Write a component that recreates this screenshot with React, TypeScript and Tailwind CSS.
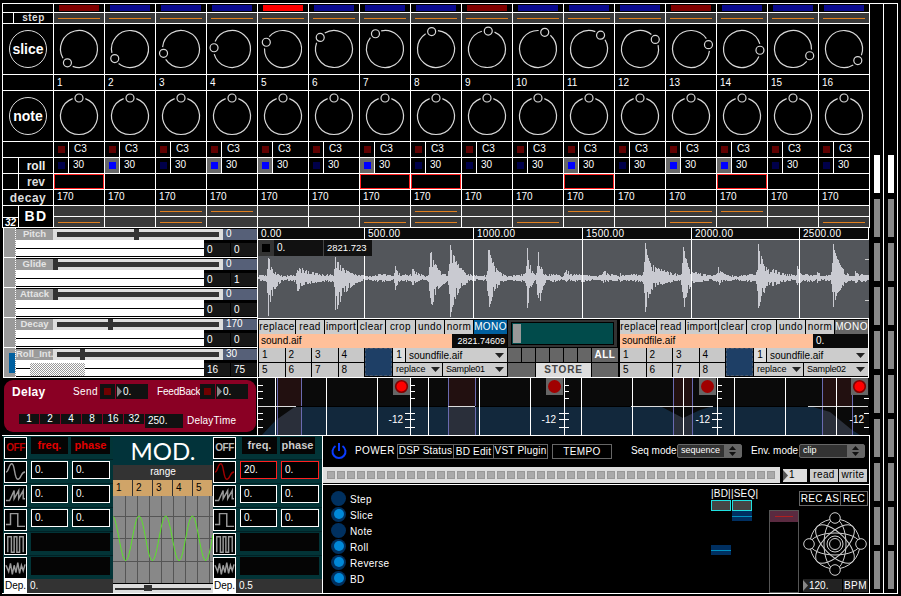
import React from 'react';

const steps = Array.from({ length: 16 }, (_, i) => i);

const stepColors: Record<number, string> = { 0: 'bg-[#800000]', 4: 'bg-[#ff0000]', 8: 'bg-[#800000]', 12: 'bg-[#800000]' };
const rollOn = [1, 3, 4, 6, 10, 12, 13];
const revOn = [0, 6, 7, 10, 13];
const bdTop = [2, 3, 7, 10, 12, 13];
const bdBottom = [0, 2, 6, 7, 9, 12, 15];

function Knob({ angle }: { angle: number }) {
  const r = 18.5;
  const pt = (a: number, rad: number) => {
    const t = (a * Math.PI) / 180;
    return [25 - rad * Math.sin(t), 25 + rad * Math.cos(t)];
  };
  const [x1, y1] = pt(angle + 20, r);
  const [x2, y2] = pt(angle - 20, r);
  const [cx, cy] = pt(angle, 18);
  return (
    <svg width="50" height="50" className="block">
      <path d={`M${x1} ${y1} A${r} ${r} 0 1 1 ${x2} ${y2}`} fill="none" stroke="#d8d8d8" strokeWidth="1.2" />
      <circle cx={cx} cy={cy} r="4" fill="none" stroke="#d8d8d8" strokeWidth="1.2" />
    </svg>
  );
}

function Cell({ children, className = '' }: { children?: React.ReactNode; className?: string }) {
  return <div className={`w-[51px] shrink-0 border-r border-white ${className}`}>{children}</div>;
}

function Sequencer() {
  return (
    <div className="flex flex-col border-t border-l border-white w-[868px] text-white">
      <div className="flex h-[9px] border-b border-white">
        <Cell />
        {steps.map((i) => (
          <Cell key={i} className="flex items-center justify-center">
            <div className={`w-[40px] h-[6px] ${stepColors[i] ?? 'bg-[#0a0a90]'}`} />
          </Cell>
        ))}
      </div>
      <div className="flex h-[11px] border-b border-white">
        <div className="w-[11px] border-r border-white" />
        <div className="w-[40px] border-r border-white flex items-center justify-center text-[10px] font-bold leading-none tracking-[0.5px] text-[#ddd]">
          step
        </div>
        {steps.map((i) => (
          <Cell key={i} className="bg-[#3a3a3a] flex items-center justify-center">
            <div className="w-[42px] h-px bg-[#e08020]" />
          </Cell>
        ))}
      </div>
      <div className="flex h-[51px] border-b border-white">
        <Cell className="flex items-center justify-center">
          <div className="w-[38px] h-[38px] rounded-full border border-[#ddd] flex items-center justify-center text-[14px] font-bold">slice</div>
        </Cell>
        {steps.map((i) => (
          <Cell key={i}>
            <Knob angle={40 + i * 18} />
          </Cell>
        ))}
      </div>
      <div className="flex h-[16px] border-b border-white">
        <Cell />
        {steps.map((i) => (
          <Cell key={i} className="pl-[3px] text-[10px] leading-[15px]">
            {i + 1}
          </Cell>
        ))}
      </div>
      <div className="flex h-[51px] border-b border-white">
        <Cell className="flex items-center justify-center">
          <div className="w-[38px] h-[38px] rounded-full border border-[#ddd] flex items-center justify-center text-[14px] font-bold">note</div>
        </Cell>
        {steps.map((i) => (
          <Cell key={i}>
            <Knob angle={180} />
          </Cell>
        ))}
      </div>
      <div className="flex h-[16px] border-b border-white">
        <Cell />
        {steps.map((i) => (
          <Cell key={i} className="flex">
            <div className="w-[15px] border-r border-white flex items-center justify-center">
              <div className="w-[7px] h-[7px] bg-[#600000]" />
            </div>
            <div className="pl-[5px] text-[10px] leading-[14px]">C3</div>
          </Cell>
        ))}
      </div>
      <div className="flex h-[16px] border-b border-white">
        <div className="w-[16px] border-r border-white" />
        <div className="w-[35px] border-r border-white flex items-center justify-center text-[12px] font-bold leading-none text-[#eee]">roll</div>
        {steps.map((i) => {
          const on = rollOn.includes(i);
          return (
            <Cell key={i} className="flex">
              <div className={`w-[15px] border-r border-white flex items-center justify-center ${on ? 'bg-[#666]' : ''}`}>
                <div className={`w-[7px] h-[7px] ${on ? 'bg-[#0000ff]' : 'bg-[#00004a]'}`} />
              </div>
              <div className="pl-[4px] text-[10px] leading-[14px]">30</div>
            </Cell>
          );
        })}
      </div>
      <div className="flex h-[16px] border-b border-white">
        <div className="w-[16px] border-r border-white" />
        <div className="w-[35px] border-r border-white flex items-center justify-center text-[12px] font-bold leading-none text-[#ddd]">rev</div>
        {steps.map((i) => (
          <Cell key={i}>{revOn.includes(i) && <div className="h-full border border-[#ff2020]" />}</Cell>
        ))}
      </div>
      <div className="flex h-[16px] border-b border-white">
        <Cell className="flex items-center justify-center text-[12px] font-bold leading-none text-[#ddd] tracking-[0.5px]">decay</Cell>
        {steps.map((i) => (
          <Cell key={i} className="pl-[3px] text-[10px] leading-[14px]">
            170
          </Cell>
        ))}
      </div>
      <div className="flex">
        <div className="w-[51px] shrink-0 flex border-r border-b border-white">
          <div className="w-[16px] border-r border-white flex flex-col justify-end">
            <div className="h-[10px] border-t border-white text-[10px] leading-[10px] font-bold italic text-center">32</div>
          </div>
          <div className="flex-1 flex items-center justify-center text-[14px] font-bold tracking-[1.5px]">BD</div>
        </div>
        <div className="flex flex-col">
          {[bdTop, bdBottom].map((list, r) => (
            <div key={r} className="flex h-[11px] border-b border-white">
              {steps.map((i) => (
                <Cell key={i} className="bg-[#3a3a3a] flex items-center justify-center">
                  {list.includes(i) && <div className="w-[42px] h-px bg-[#e08020]" />}
                </Cell>
              ))}
            </div>
          ))}
        </div>
      </div>
    </div>
  );
}

function ParamRow({ label, value, thumb, a, b, roll }: { label: string; value: string; thumb: number; a: string; b: string; roll?: boolean }) {
  return (
    <div className="flex h-[30px] border-l border-b border-white">
      <div className="w-[12px] bg-[#9a9a9a] border-r border-dotted border-white flex items-end justify-start">
        {roll && <div className="ml-[5px] mb-[4px] w-[6px] h-[20px] bg-[#0060a0]" />}
      </div>
      <div className="w-[241px] flex flex-col">
        <div className="flex h-[11px] mt-px">
          <div className="w-[37px] bg-[#9a9a9a] text-[#e4e4e4] text-[9.5px] font-bold leading-[10px] text-center whitespace-nowrap overflow-hidden">{label}</div>
          <div className="w-[170px] bg-[#ddd] relative flex items-center px-[4px]">
            <div className="w-full h-[5px] bg-[#333]" />
            <div className="absolute top-0 w-[5px] h-[11px] bg-[#333]" style={{ left: thumb }} />
          </div>
          <div className="flex-1 bg-[#566078] text-white text-[10px] leading-[10px] pl-[3px]">{value}</div>
        </div>
        <div className="flex flex-1">
          <div className="w-[188px] h-[16px] bg-white flex flex-col justify-center relative">
            {roll && <div className="absolute left-[14px] top-[3px] w-[55px] h-[13px] bg-[repeating-conic-gradient(#999_0%_25%,#fff_0%_50%)] bg-[length:2px_2px]" />}
            <div className="h-px bg-black" />
          </div>
          <div className="flex-1 flex pt-[3px] gap-px">
            <div className="w-[26px] h-[13px] bg-[#161616] text-white text-[10px] leading-[13px] pl-[3px]">{a}</div>
            <div className="flex-1 h-[13px] bg-[#161616] text-white text-[10px] leading-[13px] pl-[3px]">{b}</div>
          </div>
        </div>
      </div>
    </div>
  );
}

function NumBox({ w }: { w: string }) {
  return (
    <div className={`${w} h-[15px] bg-[#111] flex items-center pl-[1px] text-white text-[10px]`}>
      <Tri />
      <span className="ml-[1px]">0.</span>
    </div>
  );
}

function Tri({ color = '#888' }: { color?: string }) {
  return (
    <svg width="5" height="11" className="block shrink-0">
      <path d="M0 0 L5 5.5 L0 11 Z" fill={color} />
    </svg>
  );
}

function Delay() {
  return (
    <div className="ml-px mt-[2px] w-[252px] h-[52px] rounded-[9px] bg-[#8a0024] text-white flex flex-col">
      <div className="flex items-center mt-[4px] h-[15px]">
        <span className="ml-[8px] w-[61px] text-[12px] font-bold leading-none tracking-[0.3px]">Delay</span>
        <span className="w-[27px] text-[10px] tracking-[0.4px]">Send</span>
        <div className="w-[15px] h-[15px] bg-[#111] flex items-center justify-center">
          <div className="w-[7px] h-[7px] bg-[#700000]" />
        </div>
        <div className="ml-px">
          <NumBox w="w-[32px]" />
        </div>
        <span className="ml-[9px] w-[43px] text-[10px] tracking-[-0.2px] whitespace-nowrap">FeedBack</span>
        <div className="w-[15px] h-[15px] bg-[#111] flex items-center justify-center">
          <div className="w-[7px] h-[7px] bg-[#700000]" />
        </div>
        <div className="ml-px">
          <NumBox w="w-[32px]" />
        </div>
      </div>
      <div className="flex items-start mt-[15px] ml-[15px]">
        <div className="flex gap-px">
          {['1', '2', '4', '8', '16', '32'].map((t) => (
            <div key={t} className="w-[20px] h-[10px] bg-[#111] text-[10px] leading-[10px] text-center">
              {t}
            </div>
          ))}
        </div>
        <div className="ml-[1px] w-[38px] h-[14px] bg-[#111] text-[10px] leading-[14px] pl-[3px]">250.</div>
        <span className="ml-[4px] text-[10px] leading-[14px] tracking-[0.2px]">DelayTime</span>
      </div>
    </div>
  );
}

const transients: [number, number, number, number][] = [
  [268, 23, 40, 5],
  [297, 16, 17, 5],
  [300, 11, 9, 22],
  [335, 23, 40, 9],
  [395, 12, 12, 4],
  [412, 10, 8, 8],
  [430, 30, 40, 6],
  [450, 38, 40, 7],
  [488, 34, 36, 6],
  [527, 30, 36, 3],
  [538, 32, 40, 3],
  [565, 12, 5, 5],
  [603, 12, 6, 4],
  [620, 6, 4, 4],
  [645, 38, 40, 5],
  [652, 14, 11, 18],
  [683, 38, 40, 4],
  [692, 7, 6, 20],
  [718, 12, 8, 5],
  [758, 36, 34, 6],
  [772, 11, 9, 14],
  [797, 14, 14, 3],
  [817, 8, 6, 3],
  [833, 36, 33, 6],
  [855, 7, 6, 6],
];

function wavePath() {
  let seed = 17;
  const rand = () => {
    seed = (seed * 16807) % 2147483647;
    return seed / 2147483647;
  };
  let d = '';
  for (let x = 258; x < 869; x++) {
    const floor = 2 + 2 * Math.abs(Math.sin(x / 9));
    let up = floor;
    let down = floor;
    for (const [tx, u, dn, decay] of transients) {
      const env = x >= tx ? Math.exp(-(x - tx) / (decay * 1.2)) : Math.exp((x - tx) / 1.2);
      up = Math.max(up, u * env);
      down = Math.max(down, dn * env);
    }
    const k = rand() < 0.25 ? 0.5 : 0.75 + 0.25 * rand();
    const k2 = rand() < 0.25 ? 0.5 : 0.75 + 0.25 * rand();
    d += `M${x - 258 + 0.5} ${Math.max(0, 38 - up * k)} V${Math.min(78, 38 + down * k2)} `;
  }
  return d;
}

function Ruler() {
  const cols = [
    ['0.00', 'w-[106px]'],
    ['500.00', 'w-[109px]'],
    ['1000.00', 'w-[109px]'],
    ['1500.00', 'w-[109px]'],
    ['2000.00', 'w-[108px]'],
    ['2500.00', 'flex-1'],
  ];
  return (
    <div className="flex h-[12px] bg-[#0a0a0a] border-b border-white text-white text-[10px] leading-[11px]">
      {cols.map(([t, w]) => (
        <div key={t} className={`${w} pl-[3px] tracking-[0.3px] ${t === '0.00' ? '' : 'border-l border-white'}`}>
          {t}
        </div>
      ))}
    </div>
  );
}

function Waveform() {
  return (
    <div className="relative h-[79px] border-b border-white">
      <svg width="611" height="78" className="block bg-[#53565b]">
        <path d={wavePath()} stroke="#c9cad1" strokeWidth="1" fill="none" shapeRendering="crispEdges" />
        {[106, 215, 324, 433, 541].map((x) => (
          <line key={x} x1={x + 0.5} x2={x + 0.5} y1="0" y2="78" stroke="#fff" />
        ))}
        <line x1="607" x2="611" y1="19.5" y2="19.5" stroke="#ccc" />
        <line x1="607" x2="611" y1="60.5" y2="60.5" stroke="#ccc" />
      </svg>
      <div className="absolute left-0 top-0 flex h-[16px] text-white text-[10px] leading-[15px]">
        <div className="w-[16px] bg-[#333] flex items-center justify-center">
          <div className="w-[8px] h-[8px] bg-black" />
        </div>
        <div className="w-[49px] bg-[#111] pl-[3px]">0.</div>
        <div className="w-[49px] bg-[#111] border-l border-[#444] pl-[3px] text-[9.5px]">2821.723</div>
      </div>
    </div>
  );
}

function Arrow() {
  return (
    <svg width="9" height="5" className="block shrink-0">
      <path d="M0 0 H9 L4.5 5 Z" fill="#222" />
    </svg>
  );
}

function FilePanel({ file, num, mono, sample }: { file: string; num: string; mono: boolean; sample: string }) {
  const btns = [
    ['replace', 'w-[36px]'],
    ['read', 'w-[28px]'],
    ['import', 'w-[32px]'],
    ['clear', 'w-[27px]'],
    ['crop', 'w-[29px]'],
    ['undo', 'w-[28px]'],
    ['norm', 'w-[28px]'],
  ];
  return (
    <div className="w-[249px] pl-[1px] pt-[1px] flex flex-col text-[10px] text-black">
      <div className="flex gap-px h-[14px] tracking-[0.4px]">
        {btns.map(([t, w]) => (
          <div key={t} className={`${w} bg-[#ccc] text-center leading-[14px] whitespace-nowrap`}>
            {t}
          </div>
        ))}
        <div className={`w-[33px] text-center leading-[14px] text-white whitespace-nowrap ${mono ? 'bg-[#005f9e]' : 'bg-[#666]'}`}>MONO</div>
      </div>
      <div className="flex h-[14px]">
        <div className="w-[193px] bg-[#ffc09a] pl-[2px] leading-[14px]">{file}</div>
        <div className={`w-[55px] bg-[#0a0a0a] text-white leading-[14px] ${num === '0.' ? 'pl-[3px]' : 'text-right pr-[2px] text-[9px]'}`}>{num}</div>
      </div>
      <div className="flex h-[29px]">
        <div className="w-[105px] grid grid-cols-4 gap-px">
          {['1', '2', '3', '4', '5', '6', '7', '8'].map((t) => (
            <div key={t} className="bg-[#c8c8c8] pl-[3px] leading-[14px]">
              {t}
            </div>
          ))}
        </div>
        <div className="w-[27px] ml-px h-[28px] bg-[#1e3f66] border border-dashed border-[#4a5a70]" />
        <div className="ml-px flex-1 flex flex-col gap-px">
          <div className="flex h-[14px] gap-px">
            <div className="w-[12px] bg-[#ddd] text-center leading-[14px]">1</div>
            <div className="flex-1 bg-[#ccc] flex items-center justify-between pl-[3px] pr-[3px]">
              soundfile.aif
              <Arrow />
            </div>
          </div>
          <div className="flex h-[13px] gap-px text-[9px]">
            <div className="w-[49px] bg-[#ccc] flex items-center justify-between pl-[3px] pr-[2px]">
              replace
              <Arrow />
            </div>
            <div className="flex-1 bg-[#ccc] flex items-center justify-between pl-[3px] pr-[3px] tracking-[-0.2px]">
              {sample}
              <Arrow />
            </div>
          </div>
        </div>
      </div>
    </div>
  );
}

function CenterPanel() {
  return (
    <div className="w-[113px] flex flex-col pt-[1px]">
      <div className="h-[28px] bg-[#333] px-[3px] py-[2px] mr-[2px] ml-px">
        <div className="h-full border border-black bg-[#014b4b] flex p-px">
          <div className="w-[8px] h-full bg-[#999]" />
        </div>
      </div>
      <div className="mt-px flex gap-px h-[14px] pl-[1px]">
        {[0, 1, 2, 3, 4, 5].map((i) => (
          <div key={i} className="w-[13px] bg-[#666]" />
        ))}
        <div className="flex-1 mr-[1px] bg-[#666] text-white text-[10px] font-bold text-center leading-[14px] tracking-[0.5px]">ALL</div>
      </div>
      <div className="mt-px flex gap-px h-[14px] pl-[1px]">
        <div className="w-[27px] bg-[#666]" />
        <div className="w-[55px] bg-[#ddd] text-[#444] text-[10px] font-bold text-center leading-[14px] tracking-[0.8px]">STORE</div>
        <div className="flex-1 mr-[1px] bg-[#666]" />
      </div>
    </div>
  );
}

function EnvDisplay() {
  const o = 258;
  const ticks = [410, 564, 717];
  const vlines = Array.from({ length: 12 }, (_, k) => 275 + 51 * k);
  const bands = [
    [277, 301],
    [448, 475],
    [673, 692],
    [822, 852],
  ];
  const leds = [
    [393, true],
    [546, false],
    [699, false],
    [851, true],
  ] as const;
  const white = [
    [258, 296],
    [448, 475],
    [631, 713],
    [808, 868],
  ];
  return (
    <svg width="611" height="57" className="block">
      <rect width="611" height="28" fill="#0a0a0a" />
      <rect y="28" width="611" height="29" fill="#12283c" />
      {bands.map(([a, b]) => (
        <g key={a}>
          <rect x={a - o} width={b - a} height="28" fill="#221010" />
          <rect x={a - o} y="28" width={b - a} height="29" fill="#2a2f3a" />
        </g>
      ))}
      <path d="M0 28 L38 28 L18 42 L4 57 L0 57 Z" fill="#0a0a0a" />
      <path d="M402 28 L425 40 L442 32 L455 28 Z" fill="#0a0a0a" />
      <path d="M552 28 L572 34 L594 52 L602 57 L611 57 L611 28 Z" fill="#0a0a0a" />
      {bands.map(([a, b]) => (
        <g key={a}>
          <line x1={a - o + 0.5} x2={a - o + 0.5} y1="0" y2="57" stroke="#6a6ab0" />
          <line x1={b - o + 0.5} x2={b - o + 0.5} y1="0" y2="57" stroke="#6a6ab0" />
        </g>
      ))}
      <line x1="0" x2="611" y1="28.5" y2="28.5" stroke="#000" />
      {white.map(([a, b]) => (
        <line key={a} x1={a - o} x2={b - o} y1="28.5" y2="28.5" stroke="#ddd" />
      ))}
      {vlines.map((x) => (
        <line key={x} x1={x - o + 0.5} x2={x - o + 0.5} y1="0" y2="57" stroke="#fff" />
      ))}
      {[258, ...ticks].map((x) => (
        <g key={x} stroke="#fff">
          {x !== 258 && <line x1={x - o + 0.5} x2={x - o + 0.5} y1="0" y2="57" />}
          {[7.5, 13.5, 20.5].map((y) => (
            <line key={y} x1={x - o} x2={x - o + 5} y1={y} y2={y} />
          ))}
          {[35.5, 41.5, 49.5].map((y) => (
            <line key={y} x1={x === 258 ? 0 : x - o - 5} x2={x - o + 5} y1={y} y2={y} />
          ))}
        </g>
      ))}
      {[35.5, 49.5].map((y) => (
        <line key={y} x1="606" x2="611" y1={y} y2={y} stroke="#fff" />
      ))}
      <line x1="606" x2="611" y1="20.5" y2="20.5" stroke="#fff" />
      {[403, 556, 710, 864].map((x) => (
        <text key={x} x={x - o} y="45" fill="#fff" fontSize="10" textAnchor="end" fontFamily="Liberation Sans, sans-serif">
          -12
        </text>
      ))}
      {leds.map(([x, on]) => (
        <g key={x}>
          <rect x={x - o} width="17" height="17" fill="#666" />
          {on ? (
            <circle cx={x - o + 8.5} cy="8.5" r="5.8" fill="#ff0000" stroke="#800000" strokeWidth="1.6" />
          ) : (
            <circle cx={x - o + 8.5} cy="8.5" r="6.5" fill="#a00000" />
          )}
        </g>
      ))}
    </svg>
  );
}

function WaveIcon({ kind, red }: { kind: number; red?: boolean }) {
  const paths = [
    'M0 11 C3 11 3 2 6.5 2 C10 2 9 19 13 19 C17 19 16 11 21 11',
    'M0 16 L4 16 L9 5 L9 14 L14 5 L14 14 L19 5 L19 14 L21 14',
    'M0 16 L5 16 L5 4 L13 4 L13 18 L21 18',
    'M2 20 L2 3 L6 3 L6 20 L9 20 L9 3 L12 3 L12 20 L15 20 L15 3 L19 3 L19 20',
    'M0 8 L3 15 L5 6 L7 18 L9 8 L11 16 L13 5 L15 17 L17 8 L19 14 L21 7',
  ];
  return (
    <div className="w-[23px] h-[22px] shrink-0 bg-black border border-white">
      <svg width="21" height="20" viewBox="0 0 21 22" className="block">
        <path d={paths[kind]} fill="none" stroke={red ? '#a00000' : '#999'} strokeWidth="1.6" />
      </svg>
    </div>
  );
}

function ModSide({ right }: { right?: boolean }) {
  const on = right;
  return (
    <div className={`flex flex-col bg-[#023437] ${right ? 'w-[109px]' : 'w-[110px] pl-px'}`}>
      <div className="flex h-[24px] pt-px">
        <div className={`w-[23px] h-[22px] bg-black border border-white text-center text-[10px] font-bold leading-[20px] tracking-[-0.5px] ${on ? 'text-[#bbb]' : 'text-[#c00000]'}`}>OFF</div>
        <div className={`h-[17px] bg-[#050505] text-center text-[11px] font-bold leading-[16px] ${on ? 'ml-[6px] w-[35px] text-[#ccc]' : 'ml-[4px] w-[37px] text-[#e00000]'}`}>freq.</div>
        <div className={`h-[17px] bg-[#050505] text-center text-[11px] font-bold leading-[16px] ${on ? 'ml-[3px] w-[35px] text-[#ccc]' : 'ml-[3px] w-[39px] text-[#e00000]'}`}>phase</div>
      </div>
      {[0, 1, 2].map((k) => {
        const hot = on && k === 0;
        return (
          <div key={k} className="flex h-[24px] border-t border-[#012226] pt-px">
            <WaveIcon kind={k} red={hot} />
            <div className={`ml-[4px] w-[37px] h-[18px] bg-black border text-white text-[10px] leading-[16px] pl-[3px] ${hot ? 'border-[#ff2020]' : 'border-white'}`}>{hot ? '20.' : '0.'}</div>
            <div className={`ml-[4px] w-[38px] h-[18px] bg-black border text-white text-[10px] leading-[16px] pl-[3px] ${hot ? 'border-[#ff2020]' : 'border-white'}`}>0.</div>
          </div>
        );
      })}
      {[3, 4].map((k) => (
        <div key={k} className="flex h-[24px] border-t border-[#012226] pt-px">
          <WaveIcon kind={k} />
          <div className="ml-[4px] w-[79px] h-[18px] bg-[#050505]" />
        </div>
      ))}
      <div className="flex h-[14px]">
        <div className="w-[23px] bg-white text-black text-[10px] leading-[14px] text-center">Dep.</div>
        <div className="flex-1 bg-[#333] text-white text-[10px] leading-[13px] pl-[3px]">{on ? '0.5' : '0.'}</div>
      </div>
    </div>
  );
}

function ModChart() {
  let d = '';
  for (let x = 0; x <= 100; x++) {
    const abs = 113 + x;
    const y = 42.3 - 22.3 * Math.sin(((abs - 139 + 6.67) / 26.67) * 2 * Math.PI);
    d += `${x === 0 ? 'M' : 'L'}${x} ${y} `;
  }
  return (
    <svg width="100" height="87" className="block bg-[#888]">
      {[12, 24, 36, 48, 60, 72, 84, 96].map((x) => (
        <line key={x} x1={x + 0.5} x2={x + 0.5} y1="0" y2="87" stroke="#555" />
      ))}
      {[20.5, 42.5, 65.5].map((y) => (
        <line key={y} x1="0" x2="100" y1={y} y2={y} stroke="#555" />
      ))}
      <path d={d} fill="none" stroke="#5be22a" strokeWidth="1" />
    </svg>
  );
}

function ModCenter() {
  return (
    <div className="w-[100px] flex flex-col">
      <div className="h-[29px] bg-[#02333a] flex items-center justify-center text-white font-['Lato',sans-serif] font-normal text-[24px] leading-none">MOD.</div>
      <div className="h-[15px] bg-[#333] text-white text-[10px] leading-[14px] text-center">range</div>
      <div className="h-[16px] bg-[#d0a468] flex text-black text-[10px] leading-[15px]">
        {['1', '2', '3', '4', '5'].map((t) => (
          <div key={t} className="w-[20px] border-r border-[#333] pl-[3px]">
            {t}
          </div>
        ))}
      </div>
      <ModChart />
      <div className="mt-px h-[9px] bg-[#ddd] relative flex items-center px-[2px]">
        <div className="w-full h-[2px] bg-[#333]" />
        <div className="absolute left-[31px] top-[1px] w-[8px] h-[6px] bg-[#333]" />
      </div>
    </div>
  );
}

function Spin({ w, text }: { w: string; text: string }) {
  return (
    <div className={`${w} h-[14px] bg-[#333] border border-[#666] rounded-[2px] flex text-white text-[9px] leading-[11px] tracking-normal`}>
      <div className="flex-1 pl-[3px] whitespace-nowrap">{text}</div>
      <div className="w-[17px] bg-[#666] flex items-center justify-center">
        <svg width="7" height="10" className="block">
          <path d="M3.5 0 L7 4 H0 Z M3.5 10 L7 6 H0 Z" fill="#111" />
        </svg>
      </div>
    </div>
  );
}

function Logo() {
  return (
    <svg width="64" height="64" viewBox="-32 -32 64 64" className="block">
      <g fill="none" stroke="#d0d0d0" strokeWidth="1">
        <circle r="25" />
        <ellipse rx="25" ry="11" transform="rotate(45)" />
        <ellipse rx="25" ry="11" transform="rotate(135)" />
        <ellipse rx="25" ry="11" />
        <ellipse rx="25" ry="11" transform="rotate(90)" />
        <circle r="8" fill="#000" />
        <circle r="5.5" />
        <circle cy="-26" r="5.3" fill="#000" />
        <circle cy="26" r="5.3" fill="#000" />
        <circle cx="-26" r="5.3" fill="#000" />
        <circle cx="26" r="5.3" fill="#000" />
      </g>
    </svg>
  );
}

function BottomRight() {
  const leds: [string, boolean][] = [
    ['Step', false],
    ['Slice', true],
    ['Note', false],
    ['Roll', true],
    ['Reverse', true],
    ['BD', true],
  ];
  return (
    <div className="flex-1 flex flex-col border-l border-r border-white text-white text-[10px]">
      <div className="flex items-center h-[30px] pl-[8px] tracking-[0.4px] leading-none">
        <svg width="16" height="16" viewBox="0 0 16 16" className="block shrink-0">
          <path d="M4.5 3 A6.5 6.5 0 1 0 11.5 3" fill="none" stroke="#0a3cff" strokeWidth="2" />
          <line x1="8" y1="0" x2="8" y2="8" stroke="#0a3cff" strokeWidth="2" />
        </svg>
        <span className="ml-[8px] w-[42px]">POWER</span>
        <div className="w-[151px] h-[15px] border border-[#666] flex items-center whitespace-nowrap tracking-[0.2px]">
          <span className="w-[56px] border-r border-[#666] h-full text-center leading-[12px]">DSP Status</span>
          <span className="w-[40px] border-r border-[#666] h-full text-center leading-[13px]">BD Edit</span>
          <span className="flex-1 text-center">VST Plugin</span>
        </div>
        <div className="ml-[4px] w-[60px] h-[15px] border border-[#666] text-center leading-[13px]">TEMPO</div>
        <span className="ml-[19px] w-[46px] tracking-normal whitespace-nowrap">Seq mode</span>
        <Spin w="w-[65px]" text="sequence" />
        <span className="ml-[9px] w-[48px] tracking-normal whitespace-nowrap">Env. mode</span>
        <Spin w="w-[66px]" text="clip" />
      </div>
      <div className="flex items-center h-[18px]">
        <div className="w-[457px] h-[16px] bg-[#ddd] flex items-center pl-[4px] gap-[2px]">
          {Array.from({ length: 45 }, (_, i) => (
            <div key={i} className="w-[8px] h-[8px] bg-[#aaa] border border-[#999]" />
          ))}
        </div>
        <div className="ml-[3px] w-[24px] h-[13px] bg-[#ddd] flex items-center text-black leading-none">
          <Tri color="#555" />
          <span className="ml-px">1</span>
        </div>
        <div className="ml-[3px] w-[28px] h-[13px] bg-[#ccc] text-black text-center leading-[12px] tracking-[0.4px]">read</div>
        <div className="ml-px w-[28px] h-[13px] bg-[#ccc] text-black text-center leading-[12px] tracking-[0.4px]">write</div>
      </div>
      <div className="flex flex-1 border-t border-white">
        <div className="w-[388px] pl-[8px] pt-[5px] flex flex-col">
          {leds.map(([t, on]) => (
            <div key={t} className="flex items-center h-[16px]">
              <div className="w-[15px] h-[15px] rounded-full bg-[#00305f] flex items-center justify-center">
                {on && <div className="w-[10px] h-[10px] rounded-full bg-[#0088d8]" />}
              </div>
              <span className="ml-[4px] pt-[2px] tracking-[0.3px]">{t}</span>
            </div>
          ))}
        </div>
        <div className="w-[58px] flex flex-col">
          <div className="h-[15px] pt-[3px] leading-[11px] tracking-[0.2px] whitespace-nowrap">|BD||SEQ|</div>
          <div className="flex gap-px">
            <div className="w-[20px] flex flex-col">
              <div className="h-[11px] bg-[#444] border border-[#20e0e0]" />
              <div className="mt-[34px] h-[10px] bg-[#002f60] flex items-center">
                <div className="w-full h-px bg-[#0090c0]" />
              </div>
            </div>
            <div className="w-[20px] flex flex-col">
              <div className="h-[11px] bg-[#444] border border-[#20e0e0]" />
              <div className="h-[10px] bg-[#002f60] flex items-center">
                <div className="w-full h-px bg-[#0090c0]" />
              </div>
            </div>
          </div>
        </div>
        <div className="mt-[25px] w-[30px] border border-[#555] flex flex-col">
          <div className="h-[11px] bg-[#5a2a40] flex items-center justify-center">
            <div className="w-[18px] h-px bg-[#b02020]" />
          </div>
        </div>
        <div className="w-[69px] pt-[6px] flex flex-col">
          <div className="h-[15px] border border-[#666] flex leading-[13px] text-center tracking-[0.3px]">
            <span className="w-[41px] border-r border-[#666]">REC AS</span>
            <span className="flex-1">REC</span>
          </div>
          <div className="ml-[4px] mt-[6px]">
            <Logo />
          </div>
          <div className="flex mt-[3px] ml-[4px] h-[13px] leading-[13px]">
            <div className="w-[39px] bg-[#222] flex items-center">
              <Tri color="#888" />
              <span className="ml-[1px]">120.</span>
            </div>
            <div className="ml-px flex-1 bg-[#222] text-center tracking-[0.5px]">BPM</div>
          </div>
        </div>
      </div>
    </div>
  );
}

function Meters() {
  return (
    <div className="w-[28px] flex border-t border-b border-white">
      {[0, 1].map((c) => (
        <div key={c} className="w-[14px] border-r border-white pl-[4px] pt-[151px] flex flex-col gap-[6px]">
          {Array.from({ length: 10 }, (_, i) => (
            <div key={i} className={`w-[6px] h-[38px] ${i === 0 ? 'bg-white' : 'bg-[#888]'}`} />
          ))}
        </div>
      ))}
    </div>
  );
}

export default function App() {
  return (
    <div className="w-[901px] h-[596px] bg-black overflow-hidden font-['Liberation_Sans',sans-serif]">
      <div className="flex ml-[2px] mt-[3px] h-[591px]">
        <div className="w-[868px] flex flex-col">
          <Sequencer />
          <div className="flex h-[207px]">
            <div className="w-[256px] pl-px border-r border-white flex flex-col">
              <ParamRow label="Pitch" value="0" thumb={81} a="0" b="0" />
              <ParamRow label="Glide" value="0" thumb={0} a="0" b="1" />
              <ParamRow label="Attack" value="0" thumb={0} a="0" b="0" />
              <ParamRow label="Decay" value="170" thumb={55} a="0" b="0" />
              <ParamRow label="Roll_Int." value="30" thumb={27} a="16" b="75" roll />
              <Delay />
            </div>
            <div className="w-[611px] border-r border-white -mr-px flex flex-col">
              <Ruler />
              <Waveform />
              <div className="flex h-[59px] border-b border-white">
                <FilePanel file="sound.aif" num="2821.74609" mono sample="Sample01" />
                <CenterPanel />
                <FilePanel file="soundfile.aif" num="0." mono={false} sample="Sample02" />
              </div>
              <EnvDisplay />
            </div>
          </div>
          <div className="flex h-[159px] border-t border-b border-white">
            <div className="ml-px flex w-[319px] shrink-0">
              <ModSide />
              <ModCenter />
              <ModSide right />
            </div>
            <BottomRight />
          </div>
        </div>
        <Meters />
      </div>
    </div>
  );
}
